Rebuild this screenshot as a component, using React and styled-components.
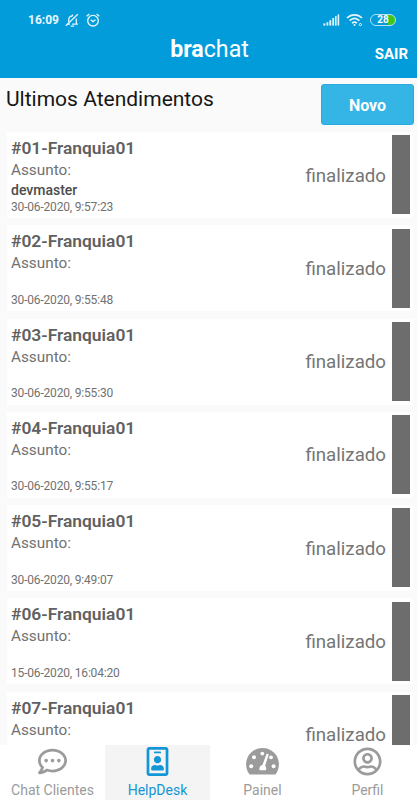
import styled, { createGlobalStyle } from "styled-components";
import { FaRegCommentDots, FaRegIdBadge, FaRegUserCircle } from "react-icons/fa";

const atendimentos = [
    { id: "01", assunto: "devmaster", data: "30-06-2020, 9:57:23" },
    { id: "02", assunto: "", data: "30-06-2020, 9:55:48" },
    { id: "03", assunto: "", data: "30-06-2020, 9:55:30" },
    { id: "04", assunto: "", data: "30-06-2020, 9:55:17" },
    { id: "05", assunto: "", data: "30-06-2020, 9:49:07" },
    { id: "06", assunto: "", data: "15-06-2020, 16:04:20" },
    { id: "07", assunto: "", data: "" },
]

const abas = [
    { nome: "Chat Clientes", Icone: FaRegCommentDots },
    { nome: "HelpDesk", Icone: FaRegIdBadge, ativa: true },
    { nome: "Painel", Icone: Velocimetro },
    { nome: "Perfil", Icone: FaRegUserCircle },
]

function Velocimetro() {
    return (
        <svg viewBox="0 -1.3 33 29" fill="currentColor">
            <path d="M3.6 26.2A16.4 16.4 0 1 1 29.4 26.2Z" />
            <g fill="#fff">
                <circle cx="8" cy="9" r="2" />
                <circle cx="16.3" cy="5.3" r="1.9" />
                <circle cx="25" cy="9" r="1.9" />
                <circle cx="5.2" cy="18" r="2" />
                <circle cx="27.6" cy="18" r="2" />
                <path d="M20.6 5.4L22.8 6 19.2 17.4C20.3 18.4 20.6 20 19.9 22H13.6C12.8 19.4 14 17.2 16.4 16.7Z" />
            </g>
        </svg>
    )
}

function SinoMudo() {
    return (
        <svg width="15" height="15" viewBox="0 0 15 15" fill="none" stroke="#e4f5fc" strokeWidth="1.3">
            <path d="M2 11.2h3M7 11.2h6M3.7 9V6.8C3.7 4.4 5.2 3 7.5 3M11.3 5.6V11M7.5 3V1.4M5.8 13.2h3.4" />
            <path d="M.8 12.8L12.8 1.2" />
        </svg>
    )
}

function Alarme() {
    return (
        <svg width="14" height="14" viewBox="0 0 14 14" fill="none" stroke="#e4f5fc" strokeWidth="1.4">
            <circle cx="7" cy="7.7" r="5.3" />
            <path d="M4.7 6.7L7 8.6l2.5-1.9M.7 3.2L3.4 1M13.3 3.2L10.6 1" />
        </svg>
    )
}

function Sinal() {
    return (
        <svg width="17" height="12" viewBox="0 0 17 12" fill="#e4f5fc">
            <rect x="0.4" y="9.4" width="1.9" height="2.2" />
            <rect x="3.5" y="8.2" width="1.8" height="3.4" />
            <rect x="6.4" y="6.2" width="1.8" height="5.4" />
            <rect x="9.3" y="4" width="1.8" height="7.6" />
            <rect x="12" y="2" width="1.6" height="9.6" />
            <rect x="14.6" y="0.4" width="1.6" height="11.2" />
        </svg>
    )
}

function Wifi() {
    return (
        <svg width="18" height="14" viewBox="0 0 18 14" fill="none" stroke="#e4f5fc" strokeWidth="1.7">
            <path d="M1 5C5.4.8 11.6.8 16 5M3.6 7.7c3-2.8 6.8-2.8 9.8 0M6 10.2c1.6-1.4 3.4-1.4 5 0" />
            <circle cx="8.5" cy="12" r="1" fill="#e4f5fc" stroke="none" />
            <circle cx="14.4" cy="11.6" r="1.1" strokeWidth="1" />
        </svg>
    )
}

export default function App() {
    return (
        <>
            <GlobalStyle />
            <Tela>
                <Topo>
                    <BarraStatus>
                        <Grupo>
                            <Hora>16:09</Hora>
                            <SinoMudo />
                            <Alarme />
                        </Grupo>
                        <Grupo>
                            <Sinal />
                            <Wifi />
                            <Bateria>28</Bateria>
                        </Grupo>
                    </BarraStatus>
                    <Cabecalho>
                        <Logo><b>bra</b>chat</Logo>
                        <Sair>SAIR</Sair>
                    </Cabecalho>
                </Topo>
                <Titulo>
                    <h1>Ultimos Atendimentos</h1>
                    <Novo>Novo</Novo>
                </Titulo>
                <Lista>
                    {atendimentos.map((item) => (
                        <Cartao key={item.id}>
                            <Dados>
                                <Franquia>#{item.id}-Franquia01</Franquia>
                                <Rotulo>Assunto:</Rotulo>
                                <Assunto>{item.assunto}</Assunto>
                                <Data>{item.data}</Data>
                            </Dados>
                            <Estado>finalizado</Estado>
                            <Faixa />
                        </Cartao>
                    ))}
                </Lista>
                <Menu>
                    {abas.map(({ nome, Icone, ativa }) => (
                        <Aba key={nome} $ativa={ativa}>
                            <Icone />
                            <span>{nome}</span>
                        </Aba>
                    ))}
                </Menu>
            </Tela>
        </>
    )
}

const GlobalStyle = createGlobalStyle`
* {
    box-sizing: border-box;
}
body {
    margin: 0;
    font-family: Roboto, sans-serif;
    overflow: hidden;
}
`
const Tela = styled.div`
width: 100%;
height: 800px;
display: flex;
flex-direction: column;
background-color: #fafafa;
overflow: hidden;
`
const Topo = styled.header`
flex: none;
height: 78px;
background-color: #039cda;
color: #fff;
`
const BarraStatus = styled.div`
height: 34px;
display: flex;
justify-content: space-between;
align-items: center;
padding: 6px 21px 0 28px;
`
const Grupo = styled.div`
display: flex;
align-items: center;
gap: 6px;
`
const Hora = styled.span`
font-weight: 700;
font-size: 12px;
color: #e9f7fd;
`
const Bateria = styled.span`
width: 26px;
height: 12px;
display: flex;
align-items: center;
justify-content: center;
border: 1.5px solid #b5e2f5;
border-radius: 6px;
background: linear-gradient(90deg, transparent 70%, #3fc51e 70%);
font-weight: 700;
font-size: 10px;
line-height: 10px;
`
const Cabecalho = styled.div`
height: 44px;
display: grid;
grid-template-columns: 1fr auto 1fr;
padding: 0 9px 0 11px;
`
const Logo = styled.div`
grid-column: 2;
font-size: 23.2px;
line-height: 30px;
b {
    font-weight: 700;
}
`
const Sair = styled.div`
justify-self: end;
padding-top: 10px;
font-weight: 700;
font-size: 15px;
line-height: 20px;
`
const Titulo = styled.div`
flex: none;
height: 54px;
display: flex;
justify-content: space-between;
padding: 6px 3px 0 6px;
h1 {
    margin: 0;
    font-weight: 400;
    font-size: 21px;
    line-height: 30px;
    color: #161616;
}
`
const Novo = styled.button`
width: 93px;
height: 41px;
border: 1px solid #29a9e0;
border-radius: 3px;
background-color: #35b4e6;
color: #fff;
font-family: inherit;
font-weight: 700;
font-size: 16px;
padding: 1px 0 0;
`
const Lista = styled.main`
flex: 1;
min-height: 0;
display: flex;
flex-direction: column;
gap: 7.25px;
padding: 0 4px 0 7px;
overflow: hidden;
`
const Cartao = styled.div`
flex: none;
height: 86px;
display: flex;
align-items: center;
padding: 0 3px 0 4px;
background-color: #fff;
`
const Dados = styled.div`
flex: 1;
height: 100%;
padding-top: 5px;
color: #717171;
`
const Franquia = styled.div`
font-weight: 600;
font-size: 17.4px;
line-height: 22px;
color: #606060;
`
const Rotulo = styled.div`
font-size: 15.3px;
line-height: 22px;
`
const Assunto = styled.div`
height: 17.6px;
font-weight: 500;
font-size: 14px;
line-height: 18px;
color: #4c4c4c;
`
const Data = styled.div`
font-size: 12px;
line-height: 17px;
letter-spacing: -.18px;
`
const Estado = styled.div`
margin-right: 6px;
padding-top: 1.4px;
font-size: 18.7px;
color: #757575;
`
const Faixa = styled.div`
width: 18px;
height: 79px;
margin-bottom: .3px;
background-color: #6d6d6d;
`
const Menu = styled.nav`
flex: none;
height: 55px;
display: grid;
grid-template-columns: repeat(4, 105px);
background-color: #fff;
`
const Aba = styled.div`
display: flex;
flex-direction: column;
align-items: center;
padding-top: 2px;
font-size: 14px;
line-height: 18px;
color: ${props => props.$ativa ? "#1396d6" : "#9b9b9b"};
background-color: ${props => props.$ativa ? "#f4f4f4" : "#fff"};
svg {
    flex: none;
    width: auto;
    height: 29px;
}
span {
    margin-top: 5px;
}
`
